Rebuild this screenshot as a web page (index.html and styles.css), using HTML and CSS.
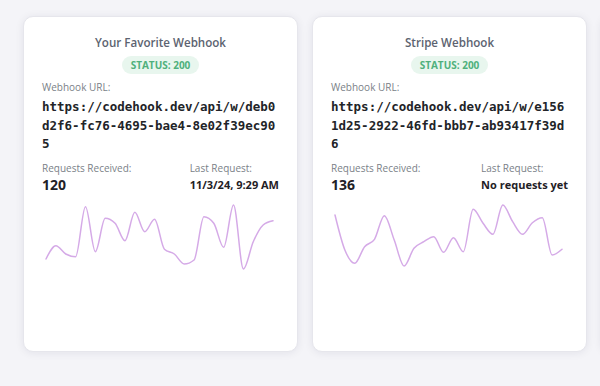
FILE: index.html
```html
<!DOCTYPE html>
<html>
<head>
<meta charset="utf-8">
<link rel="stylesheet" href="styles.css">
</head>
<body>
<div class="row">
  <div class="card">
    <div class="title">Your Favorite Webhook</div>
    <div class="badge-wrap"><span class="badge">STATUS: 200</span></div>
    <div class="label">Webhook URL:</div>
    <div class="url">https://codehook.dev/api/w/deb0d2f6-fc76-4695-bae4-8e02f39ec905</div>
    <div class="stats">
      <div class="stat">
        <div class="label">Requests Received:</div>
        <div class="count">120</div>
      </div>
      <div class="stat stat-right">
        <div class="label">Last Request:</div>
        <div class="last">11/3/24, 9:29 AM</div>
      </div>
    </div>
    <svg class="chart" width="236" height="140" viewBox="0 0 236 140">
      <path d="M4,64 C7.29,57.35 10.58,50.7 13.87,50.7 S20.45,57.2 23.74,59 S30.32,61.7 33.61,61.7 S40.19,11.7 43.48,11.7 S50.06,56.7 53.35,56.7 S59.93,23.3 63.22,23.3 S69.8,24.97 73.09,28.3 S79.67,45.7 82.96,45.7 S89.54,17.3 92.83,17.3 S99.41,36.7 102.7,36.7 S109.28,24.3 112.57,24.3 S119.15,51.17 122.44,54.3 S129.02,56.55 132.31,59 S138.89,69 142.18,69 S148.76,67.67 152.05,65 S158.63,21.7 161.92,21.7 S168.5,23.9 171.79,28.3 S178.37,52.3 181.66,52.3 S188.24,10 191.53,10 S198.11,74 201.4,74 S207.98,54.03 211.27,46.7 S217.85,32.87 221.14,30 S227.72,26.42 231.01,25.7"/>
    </svg>
  </div>
  <div class="card">
    <div class="title">Stripe Webhook</div>
    <div class="badge-wrap"><span class="badge">STATUS: 200</span></div>
    <div class="label">Webhook URL:</div>
    <div class="url">https://codehook.dev/api/w/e1561d25-2922-46fd-bbb7-ab93417f39d6</div>
    <div class="stats">
      <div class="stat">
        <div class="label">Requests Received:</div>
        <div class="count">136</div>
      </div>
      <div class="stat stat-right">
        <div class="label">Last Request:</div>
        <div class="last">No requests yet</div>
      </div>
    </div>
    <svg class="chart" width="236" height="140" viewBox="0 0 236 140">
      <path d="M4,20 C7.29,33.48 10.58,46.95 13.87,55 S20.45,68.3 23.74,68.3 S30.32,55.7 33.61,51.7 S40.19,49.23 43.48,44.3 S50.06,20.7 53.35,20.7 S59.93,36.62 63.22,45 S69.8,71 73.09,71 S79.67,57.35 82.96,53.3 S89.54,48.63 92.83,46.7 S99.41,41.7 102.7,41.7 S109.28,57.3 112.57,57.3 S119.15,42.7 122.44,42.7 S129.02,56.7 132.31,56.7 S138.89,14.3 142.18,14.3 S148.76,24.13 152.05,28.3 S158.63,39.3 161.92,39.3 S168.5,10 171.79,10 S178.37,21.82 181.66,26.7 S188.24,39.3 191.53,39.3 S198.11,30.47 201.4,27.7 S207.98,22.7 211.27,22.7 S217.85,60 221.14,60 S227.72,57.15 231.01,54.3"/>
    </svg>
  </div>
  <div class="card card-ghost"></div>
</div>
</body>
</html>
```

FILE: styles.css
```css
html, body {
  margin: 0;
  padding: 0;
  background: #f4f4f8;
  width: 600px;
  height: 386px;
  overflow: hidden;
  font-family: "Open Sans", "Liberation Sans", sans-serif;
}

.row {
  display: flex;
  gap: 14px;
  width: 600px;
  height: 386px;
  box-sizing: border-box;
  padding: 16px 0 0 23px;
  overflow: hidden;
}

.card {
  flex: 0 0 275px;
  height: 336px;
  box-sizing: border-box;
  background: #ffffff;
  border: 1px solid #e6e6ec;
  border-radius: 10px;
  box-shadow: 0 1px 8px rgba(30, 30, 70, 0.08);
  padding: 18px 18px 0 18px;
  display: flex;
  flex-direction: column;
}

.title {
  text-align: center;
  font-size: 11.6px;
  font-weight: 600;
  color: #5c6370;
  line-height: 16px;
}

.badge-wrap {
  display: flex;
  justify-content: center;
  margin-top: 5px;
}

.badge {
  display: inline-block;
  background: #e8f6ee;
  color: #4fb07c;
  font-size: 10px;
  font-weight: 700;
  line-height: 18px;
  height: 18px;
  padding: 0 9px;
  border-radius: 9px;
}

.label {
  font-size: 10px;
  color: #7a7f88;
  line-height: 13px;
}

.badge-wrap + .label {
  margin-top: 7px;
}

.url {
  font-family: "DejaVu Sans Mono", "Liberation Mono", monospace;
  font-weight: 700;
  font-size: 12.5px;
  line-height: 18.5px;
  color: #222428;
  word-break: break-all;
  margin-top: 4px;
}

.stats {
  display: flex;
  justify-content: space-between;
  margin-top: 8px;
}

.count {
  font-size: 14px;
  font-weight: 700;
  color: #1f2126;
  line-height: 19px;
}

.last {
  font-size: 11px;
  font-weight: 700;
  color: #1f2126;
  line-height: 19px;
}

.chart {
  display: block;
  margin-top: 1px;
}

.chart path {
  fill: none;
  stroke: #d5aae7;
  stroke-width: 1.5;
  stroke-linecap: round;
  stroke-linejoin: round;
}
```
